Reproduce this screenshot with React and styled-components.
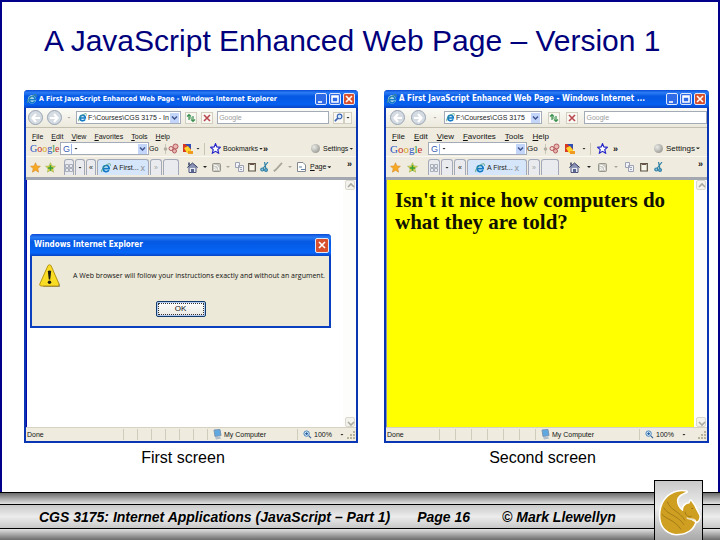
import React from 'react';
import styled, { createGlobalStyle } from 'styled-components';

const App = () => {
    return (
        <>
            <GlobalStyle />
            <Slide>
                <Board>
                    <Title>A JavaScript Enhanced Web Page – Version 1</Title>
                    <Screens>
                        <Screen>
                            <BrowserWindow
                                id="first"
                                title="A First JavaScript Enhanced Web Page - Windows Internet Explorer"
                                address="F:\Courses\CGS 3175 - Inter"
                            >
                                <Page $edge>
                                    <AlertBox />
                                </Page>
                            </BrowserWindow>
                            <Caption>First screen</Caption>
                        </Screen>
                        <Screen>
                            <BrowserWindow
                                id="second"
                                wide
                                title="A First JavaScript Enhanced Web Page - Windows Internet ..."
                                address="F:\Courses\CGS 3175"
                            >
                                <Page $color="#ffff00">
                                    <Message>Isn't it nice how computers do what they are told?</Message>
                                </Page>
                            </BrowserWindow>
                            <Caption>Second screen</Caption>
                        </Screen>
                    </Screens>
                </Board>
                <Footer>
                    <Band />
                    <FooterText>
                        <span>CGS 3175: Internet Applications (JavaScript – Part 1)</span>
                        <span>Page 16</span>
                        <span>© Mark Llewellyn</span>
                    </FooterText>
                    <Band $flip />
                    <Badge><Pegasus /></Badge>
                </Footer>
            </Slide>
        </>
    );
};
export default App;

const menus = ['File', 'Edit', 'View', 'Favorites', 'Tools', 'Help'];

const BrowserWindow = ({ id, title, address, wide, children }) => {
    return (
        <Frame>
            <TitleBar $wide={wide}>
                <IeIcon size={10} />
                <TitleText>{title}</TitleText>
                <CaptionButton aria-label="Minimize"><Glyph d="M2 8h4" /></CaptionButton>
                <CaptionButton aria-label="Maximize"><Glyph d="M2 2h6v6h-6zM2 3h6" /></CaptionButton>
                <CaptionButton aria-label="Close" $close><Glyph d="M2 2l6 6M8 2l-6 6" /></CaptionButton>
            </TitleBar>
            <NavRow $wide={wide}>
                <RoundButton aria-label="Back"><ArrowIcon /></RoundButton>
                <RoundButton aria-label="Forward" $flip><ArrowIcon /></RoundButton>
                <Caret $pale />
                <Field $grow={wide ? 98 : 105}>
                    <IeIcon size={9} />
                    <FieldInput id={id + '-address'} aria-label="Address" defaultValue={address} />
                    <DropButton aria-label="Address list"><Chevron /></DropButton>
                </Field>
                <ToolButton aria-label="Refresh"><RefreshIcon /></ToolButton>
                <ToolButton aria-label="Stop"><StopIcon /></ToolButton>
                <Field $grow={wide ? 123 : 112}>
                    <FieldInput $pale id={id + '-search'} aria-label="Search" defaultValue="Google" />
                </Field>
                {!wide && (
                    <ButtonPair>
                        <ToolButton aria-label="Search"><LensIcon /></ToolButton>
                        <ToolButton aria-label="Search options"><Caret /></ToolButton>
                    </ButtonPair>
                )}
            </NavRow>
            <MenuRow $wide={wide}>
                {menus.map((name) => (
                    <MenuItem key={name}><u>{name[0]}</u>{name.slice(1)}</MenuItem>
                ))}
            </MenuRow>
            <GoogleRow $wide={wide}>
                <GoogleLogo $wide={wide}>
                    <b>G</b><b>o</b><b>o</b><b>g</b><b>l</b><b>e</b>
                </GoogleLogo>
                <Field>
                    <Initial>G</Initial>
                    <Caret />
                    <FieldInput id={id + '-google'} aria-label="Google search" />
                    <DropButton aria-label="Search history"><Chevron /></DropButton>
                </Field>
                <FlatButton>Go</FlatButton>
                <KnobIcon />
                <GearsIcon />
                <PaintIcon />
                <Caret />
                <Divider />
                <StarIcon hollow />
                {wide ? <span /> : <FlatButton>Bookmarks<Caret /></FlatButton>}
                <More>»</More>
                <Stretch />
                <Ball />
                <FlatButton>Settings<Caret /></FlatButton>
            </GoogleRow>
            <TabRow $wide={wide}>
                <StarIcon />
                <StarIcon plus />
                <Tabs $wide={wide}>
                    <Tab aria-label="Quick tabs"><GridIcon /></Tab>
                    <Tab aria-label="Tab list"><Caret /></Tab>
                    <Tab>«</Tab>
                    <Tab $active><IeIcon size={10} /><span>A First...</span><small>x</small></Tab>
                    <Tab $pale>»</Tab>
                    <Tab aria-label="New tab" />
                </Tabs>
                <HomeIcon />
                <Caret />
                <FeedIcon />
                <Caret $pale />
                <CopyIcon />
                <PasteIcon />
                <CutIcon />
                {!wide && <PenIcon />}
                {!wide && <Caret $pale />}
                {!wide && <PageIcon />}
                {!wide && <FlatButton><u>P</u>age<Caret /></FlatButton>}
                <Stretch />
                <More $high>»</More>
            </TabRow>
            <View>
                {children}
                <ScrollBar>
                    <ScrollButton aria-label="Scroll up"><Glyph d="M2 6l3-3l3 3" color="#a9a9a0" /></ScrollButton>
                    <ScrollButton aria-label="Scroll down"><Glyph d="M2 4l3 3l3-3" color="#a9a9a0" /></ScrollButton>
                </ScrollBar>
            </View>
            <StatusRow $wide={wide}>
                <Status>Done</Status>
                <Cell /><Cell /><Cell /><Cell /><Cell /><Cell />
                <Cell $wide><MonitorIcon />My Computer</Cell>
                <Cell $wide><LensIcon plus />100%<Caret /></Cell>
                <GripIcon />
            </StatusRow>
        </Frame>
    );
};

const AlertBox = () => {
    return (
        <Alert role="alertdialog" aria-label="Windows Internet Explorer">
            <AlertTitle>
                <span>Windows Internet Explorer</span>
                <CaptionButton aria-label="Close" $close $big><Glyph d="M2 2l6 6M8 2l-6 6" /></CaptionButton>
            </AlertTitle>
            <AlertBody>
                <WarningIcon />
                <p>A Web browser will follow your instructions exactly and without an argument.</p>
            </AlertBody>
            <AlertFoot>
                <OkButton>OK</OkButton>
            </AlertFoot>
        </Alert>
    );
};

const Glyph = ({ d, color = '#fff' }) => (
    <svg width="10" height="10" viewBox="0 0 10 10" fill="none" stroke={color} strokeWidth="1.6">
        <path d={d} />
    </svg>
);

const Chevron = () => (
    <svg width="7" height="7" viewBox="0 0 7 7" fill="none" stroke="#3f568f" strokeWidth="1.5">
        <path d="M1 2.500l2.500 2.500l2.500-2.500" />
    </svg>
);

const IeIcon = ({ size }) => (
    <svg width={size} height={size} viewBox="0 0 12 12" fill="none">
        <circle cx="6" cy="6.500" r="5" fill="#d9f1ff" />
        <path d="M2.500 6.700h7.300c0-5-7.300-5-7.300 0c0 4.500 5.500 4.500 7 1.800" stroke="#1379c4" strokeWidth="2" />
        <path d="M1 11c-2-3 6-11 10-10c1 .5.500 2 0 2.500" stroke="#4c9d73" strokeWidth="1" />
    </svg>
);

const ArrowIcon = () => (
    <svg width="10" height="10" viewBox="0 0 10 10" fill="none" stroke="#fff" strokeWidth="2.200">
        <path d="M5 1L1.500 5L5 9M2 5h7" />
    </svg>
);

const RefreshIcon = () => (
    <svg width="10" height="10" viewBox="0 0 10 10" fill="none" stroke="#3c9150" strokeWidth="1.200">
        <path d="M3 7V1.500M1 3.500l2-2l2 2M3 5h3M7 3v5.500M5 6.500l2 2l2-2" />
    </svg>
);

const StopIcon = () => (
    <svg width="10" height="10" viewBox="0 0 10 10" stroke="#b9474f" strokeWidth="1.600">
        <path d="M2 2l6 6M8 2l-6 6" />
    </svg>
);

const LensIcon = ({ plus }) => (
    <svg width="9" height="9" viewBox="0 0 10 10" fill="none">
        {plus ? (
            <>
                <circle cx="4" cy="4" r="3" fill="#d5ecfb" stroke="#3c78b4" />
                <path d="M2.500 4h3M4 2.500v3M6.500 6.500L9 9" stroke="#2e5f9d" strokeWidth="1.200" />
            </>
        ) : (
            <>
                <circle cx="6.200" cy="3.800" r="2.600" fill="#dcecff" stroke="#3c66b5" strokeWidth="1.300" />
                <path d="M4.300 5.700L1 9" stroke="#3c66b5" strokeWidth="1.800" />
            </>
        )}
    </svg>
);

const StarIcon = ({ hollow, plus }) => (
    <svg width="11" height="11" viewBox="0 0 12 12">
        <path
            d="M6 .8l1.500 3.500l3.900.4l-2.900 2.500l.9 3.900L6 9.100l-3.400 2l.9-3.900L.6 4.700l3.900-.4z"
            fill={hollow ? '#fff' : plus ? '#f5d34a' : '#f7a922'}
            stroke={hollow ? '#2424c8' : plus ? '#8ab04a' : '#d98420'}
            strokeWidth={hollow ? 1.3 : 0.6}
        />
        {plus && <path d="M6 3.500v6M3 6.500h6" stroke="#35a033" strokeWidth="1.800" />}
    </svg>
);

const KnobIcon = () => (
    <svg width="5" height="12" viewBox="0 0 5 12">
        <path d="M2.500 1v10" stroke="#c9c6b8" />
        <circle cx="2.500" cy="6" r="1.800" fill="#b2afa2" />
    </svg>
);

const GearsIcon = () => (
    <svg width="11" height="11" viewBox="0 0 11 11" fill="none" stroke="#b4595b">
        <circle cx="7.500" cy="3.500" r="2.500" fill="#e9b6b2" />
        <circle cx="3" cy="5.500" r="2" fill="#f5dcd8" />
        <circle cx="6.500" cy="8" r="2" fill="#e9b6b2" />
    </svg>
);

const PaintIcon = () => (
    <svg width="10" height="11" viewBox="0 0 10 11">
        <path d="M0 1h8v8h-8z" fill="#d9391f" />
        <path d="M2 1l6 0v5z" fill="#2f4fb5" />
        <path d="M1 5l4-2l3 4v3h-4z" fill="#ffd52c" />
        <path d="M5 8h5v3h-5z" fill="#ef9b22" />
    </svg>
);

const GridIcon = () => (
    <svg width="8" height="8" viewBox="0 0 8 8" fill="#e8edf5" stroke="#a9aeb9">
        <path d="M.5 .5h3v3h-3zM4.500 .5h3v3h-3zM.5 4.500h3v3h-3zM4.500 4.500h3v3h-3z" />
    </svg>
);

const HomeIcon = () => (
    <svg width="11" height="11" viewBox="0 0 11 11">
        <path d="M2 5h7v5.500h-7z" fill="#e6e9f4" stroke="#4c5578" />
        <path d="M.3 5.500L5.500 1l5.200 4.500" fill="#8a93b6" stroke="#343d64" />
        <path d="M4 7h3v3.500h-3z" fill="#59658f" />
        <path d="M2 .5v3" stroke="#343d64" strokeWidth="1.500" />
    </svg>
);

const FeedIcon = () => (
    <svg width="9" height="9" viewBox="0 0 9 9" fill="none">
        <rect x=".5" y=".5" width="8" height="8" rx="1" fill="#c9c8c0" stroke="#98978f" />
        <path d="M2 4.500q2.500 0 2.500 2.500M2 2.200q4.800 0 4.800 4.800" stroke="#fff" />
        <circle cx="2.600" cy="6.500" r=".8" fill="#fff" />
    </svg>
);

const CopyIcon = () => (
    <svg width="9" height="10" viewBox="0 0 9 10" fill="#f1f3f8" stroke="#9da3b4">
        <path d="M.5 .5h4v5h-4zM3.500 3.500h5v6h-5z" />
        <path d="M5 5.500h2M5 7.500h2" />
    </svg>
);

const PasteIcon = () => (
    <svg width="8" height="10" viewBox="0 0 8 10">
        <path d="M.7 1.700h6.600v7.300h-6.600z" fill="#f8f6e9" stroke="#5b5142" strokeWidth="1.200" />
        <path d="M2 1h4v2h-4z" fill="#66564a" />
    </svg>
);

const CutIcon = () => (
    <svg width="9" height="10" viewBox="0 0 9 10" fill="none" stroke="#2f7fa6" strokeWidth="1.200">
        <path d="M8 0L3 6.500M4.500 0L6 7" />
        <circle cx="2.300" cy="7.500" r="1.500" fill="#8bc4df" />
        <circle cx="6" cy="8" r="1.400" fill="#8bc4df" />
    </svg>
);

const PenIcon = () => (
    <svg width="10" height="10" viewBox="0 0 10 10">
        <path d="M9 .8L3 7.500L.8 9.300" fill="none" stroke="#a9a79c" strokeWidth="1.800" />
    </svg>
);

const PageIcon = () => (
    <svg width="9" height="10" viewBox="0 0 9 10">
        <path d="M.5 .5h5.500l2.500 2.500v6.500h-8z" fill="#fff" stroke="#85888f" />
        <path d="M2 5h3M4 7.500h4" stroke="#5d81a8" />
    </svg>
);

const MonitorIcon = () => (
    <svg width="9" height="11" viewBox="0 0 9 11">
        <path d="M1 1l6-.5l1 6l-6 1z" fill="#5fa9e2" stroke="#7b96b5" />
        <path d="M2 8.500l5-1l1 2l-5 1z" fill="#aebccb" />
    </svg>
);

const GripIcon = () => (
    <svg width="9" height="9" viewBox="0 0 9 9" fill="#b9b39b">
        <path d="M7 1h2v2h-2zM4 4h2v2h-2zM7 4h2v2h-2zM1 7h2v2h-2zM4 7h2v2h-2zM7 7h2v2h-2z" />
    </svg>
);

const WarningIcon = () => (
    <svg width="22" height="24" viewBox="0 0 22 24">
        <path d="M12 3L21 21q.5 2-1 2H4z" fill="#8f8a78" />
        <path d="M9 1.500q1.500-1.500 3 0L20 20q.3 2-1.300 2H2q-1.800-.3-1.200-2z" fill="#f9dc24" stroke="#b89514" />
        <path d="M8.800 7q1.700-1 3.400 0L11.200 15.500h-1.400z" fill="#1c1a10" />
        <circle cx="10.500" cy="18.200" r="1.700" fill="#1c1a10" />
    </svg>
);

const pegasusShape =
    'M95 32C70 26 42 38 28 60C17 78 13 102 19 124C25 146 48 162 72 159C98 157 116 143 121 124L110 117C115 112 121 114 126 122C132 119 134 113 134 106C130 94 122 84 119 75L108 59L104 67C92 68 84 76 85 91C76 86 66 74 66 58C67 46 78 38 95 32z';

const Pegasus = () => (
    <svg width="48" height="60" viewBox="0 0 145 180" fill="none">
        <path d={pegasusShape} stroke="#fff" strokeWidth="9" strokeLinejoin="round" />
        <path d={pegasusShape} fill="#cf9f22" />
        <path
            d="M37 61C45 88 73 89 91 119M26 80C40 103 67 101 88 132M20 99C36 117 57 115 79 146M91 92C92 104 101 108 111 106"
            stroke="#8e6a12"
            strokeWidth="2"
        />
        <path d="M96 110C102 119 115 110 121 118" stroke="#eee6ca" strokeWidth="5" />
        <circle cx="112" cy="82" r="2" fill="#7d5d10" />
    </svg>
);

const GlobalStyle = createGlobalStyle`
  * {
    box-sizing: border-box;
  }
  body {
    margin: 0;
    background: #fff;
    font-family: "Liberation Sans", Arial, sans-serif;
  }
  button, input {
    font: inherit;
    color: inherit;
    padding: 0;
    border: 0;
    background: none;
  }
  svg {
    display: block;
    flex: none;
  }
`
const Slide = styled.main`
  min-height: 100vh;
  display: flex;
  flex-direction: column;
`
const Board = styled.section`
  flex: 1;
  display: flex;
  flex-direction: column;
  border: 2px solid #00008b;
  border-bottom: 0;
`
const Title = styled.h1`
  margin: 0;
  padding: 21px 0 0 42px;
  height: 88px;
  font-size: 30px;
  line-height: 36px;
  font-weight: 400;
  color: #00007c;
`
const Screens = styled.div`
  flex: 1;
  display: grid;
  grid-template-columns: 334fr 325fr;
  column-gap: 26px;
  padding: 0 9px 0 22px;
`
const Screen = styled.figure`
  margin: 0;
  min-width: 0;
  display: flex;
  flex-direction: column;
`
const Caption = styled.figcaption`
  height: 49px;
  padding-top: 5px;
  padding-right: 16px;
  text-align: center;
  font-size: 16px;
  line-height: 20px;
  color: #000;
  ${Screen}:nth-child(2) & {
    padding-right: 8px;
  }
`
const Frame = styled.div`
  flex: 1;
  display: flex;
  flex-direction: column;
  background: #efecdf;
  border: 2px solid #0a36b4;
  border-top: 0;
  border-radius: 4px 4px 0 0;
  font-size: 8px;
  line-height: 10px;
  color: #111;
`
const TitleBar = styled.header`
  display: flex;
  align-items: center;
  gap: 2px;
  height: 18px;
  margin: 0 -2px;
  padding: 0 3px;
  border-radius: 4px 4px 0 0;
  background: linear-gradient(#0a4bd8, #2a7cf4 15%, #0558e2 35%, #0560f0 80%, #0a44c4);
  color: #fff;
  font-family: "DejaVu Sans Condensed", "DejaVu Sans", sans-serif;
  font-weight: 700;
  font-size: ${(props) => (props.$wide ? '8px' : '7px')};
`
const TitleText = styled.span`
  flex: 1;
  min-width: 0;
  overflow: hidden;
  white-space: nowrap;
`
const CaptionButton = styled.button`
  display: grid;
  place-items: center;
  flex: none;
  width: ${(props) => (props.$big ? '14px' : '12px')};
  height: ${(props) => (props.$big ? '15px' : '12px')};
  border: 1px solid #dfe8ff;
  border-radius: 2px;
  background: ${(props) => (props.$close ? '#d8502c' : '#2f6be6')};
`
const NavRow = styled.div`
  display: flex;
  align-items: center;
  gap: ${(props) => (props.$wide ? '6px' : '4px')};
  height: 20px;
  padding: 0 ${(props) => (props.$wide ? '0' : '4px')} 0 ${(props) => (props.$wide ? '4px' : '2px')};
  background: linear-gradient(#fbfbf7, #ece9dc);
  border-bottom: 1px solid #c2bfae;
`
const RoundButton = styled.button`
  display: grid;
  place-items: center;
  width: 15px;
  height: 15px;
  flex: none;
  border: 1px solid #98a4b4;
  border-radius: 50%;
  background: #d5dbe2;
  transform: ${(props) => (props.$flip ? 'scaleX(-1)' : 'none')};
`
const Caret = styled.i`
  flex: none;
  display: inline-block;
  width: 4px;
  height: 2px;
  margin: 0 1px;
  vertical-align: middle;
  background: ${(props) => (props.$pale ? '#a9a79c' : '#222')};
  clip-path: polygon(0 0, 100% 0, 50% 100%);
`
const Field = styled.div`
  flex: ${(props) => props.$grow || 1} 1 0;
  min-width: 0;
  display: flex;
  align-items: center;
  gap: 1px;
  height: 13px;
  padding: 1px;
  background: #fff;
  border: 1px solid #a4abb8;
  color: #222;
`
const FieldInput = styled.input`
  flex: 1;
  min-width: 0;
  height: 10px;
  outline: 0;
  font-size: 7px;
  color: ${(props) => (props.$pale ? '#9c9c9c' : '#222')};
`
const DropButton = styled.button`
  display: grid;
  place-items: center;
  width: 9px;
  height: 10px;
  background: #c3d5f8;
`
const ToolButton = styled.button`
  display: grid;
  place-items: center;
  flex: none;
  min-width: 8px;
  height: 12px;
  border: 1px solid #d2cfc1;
  background: #f8f7f1;
`
const ButtonPair = styled.div`
  display: flex;
`
const MenuRow = styled.nav`
  display: flex;
  gap: ${(props) => (props.$wide ? '9px' : '8px')};
  padding: 3px 6px 0;
  height: 13px;
  font-size: ${(props) => (props.$wide ? '8px' : '7px')};
`
const MenuItem = styled.button`
  line-height: 9px;
`
const GoogleRow = styled.div`
  display: grid;
  align-items: center;
  height: 16px;
  padding-left: 4px;
  border-bottom: 1px solid #f9f8f2;
  white-space: nowrap;
  grid-template-columns: ${(props) =>
        props.$wide
            ? '38px 99px 16px 6px 16px 16px 9px 7px 16px 0 12px 1fr 12px 41px'
            : '30px 89px 14px 5px 15px 12px 9px 6px 13px 40px 12px 1fr 12px 33px'};
  font-size: ${(props) => (props.$wide ? '8px' : '7px')};
`
const GoogleLogo = styled.span`
  font-family: "Liberation Serif", serif;
  font-size: ${(props) => (props.$wide ? '11px' : '10px')};
  b {
    font-weight: 400;
    color: #2a53c4;
  }
  b:nth-child(2), b:nth-child(6) {
    color: #c9302a;
  }
  b:nth-child(3) {
    color: #d9a31c;
  }
  b:nth-child(5) {
    color: #2c9440;
  }
`
const Initial = styled.span`
  padding: 0 1px;
  border-right: 1px solid #9db4e6;
  color: #3c60b5;
  font-size: 9px;
`
const FlatButton = styled.button`
  text-align: left;
  white-space: nowrap;
`
const Divider = styled.span`
  width: 1px;
  height: 12px;
  background: #c9c5b2;
`
const More = styled.span`
  font-size: 9px;
  font-weight: 700;
  align-self: ${(props) => (props.$high ? 'flex-start' : 'center')};
`
const Stretch = styled.span`
  flex: 1;
`
const Ball = styled.span`
  width: 9px;
  height: 9px;
  border-radius: 50%;
  background: radial-gradient(circle at 35% 35%, #e9e9e6, #85857f);
`
const TabRow = styled.div`
  display: flex;
  align-items: center;
  gap: ${(props) => (props.$wide ? '6px' : '4px')};
  height: 23px;
  padding: 2px 4px;
  border-bottom: 3px solid #a3a7b0;
  white-space: nowrap;
  font-size: 7px;
`
const Tab = styled.button`
  display: flex;
  align-items: center;
  justify-content: center;
  gap: 2px;
  min-width: 0;
  overflow: hidden;
  height: 16px;
  border: 1px solid #a3a9b8;
  border-bottom: 0;
  border-radius: 3px 3px 0 0;
  background: ${(props) => (props.$active ? '#d6e6fa' : '#e9ebee')};
  color: ${(props) => (props.$pale ? '#a5a5a5' : '#222')};
  small {
    font-size: 9px;
    color: #8a8f99;
  }
`
const Tabs = styled.div`
  display: grid;
  column-gap: 1px;
  margin: 0 4px;
  grid-template-columns: ${(props) =>
        props.$wide
            ? '12px 12px 12px 60px 12px 18px'
            : '10px 10px 10px 52px 12px 16px'};
`
const View = styled.div`
  flex: 1;
  display: flex;
  min-height: 240px;
  background: #fff;
`
const Page = styled.div`
  flex: 1;
  min-width: 0;
  background: ${(props) => props.$color || '#fff'};
  border-left: ${(props) => (props.$edge ? '1px solid #0a0aa8' : '1px solid #8d93a0')};
`
const ScrollBar = styled.div`
  width: 13px;
  display: flex;
  flex-direction: column;
  justify-content: space-between;
  align-items: center;
  background: #fdfdfb;
`
const ScrollButton = styled.button`
  display: grid;
  place-items: center;
  width: 10px;
  height: 10px;
  border: 1px solid #dad8cc;
  border-radius: 2px;
  background: #f3f2ec;
`
const StatusRow = styled.footer`
  display: grid;
  grid-template-columns: ${(props) =>
        props.$wide
            ? '1fr repeat(6, 16px) 104px 58px 10px'
            : '1fr repeat(6, 14px) 90px 49px 10px'};
  height: 14px;
  align-items: center;
  border-top: 1px solid #d5d2c3;
  font-size: 7px;
`
const Status = styled.span`
  padding-left: 1px;
`
const Cell = styled.span`
  display: flex;
  align-items: center;
  gap: 2px;
  height: 11px;
  padding-left: ${(props) => (props.$wide ? '5px' : '0')};
  border-left: 1px solid #cfccbb;
  ${Caret} {
    margin-left: 6px;
  }
`
const Message = styled.p`
  margin: 0;
  padding: 9px 8px;
  font-family: "Liberation Serif", serif;
  font-weight: 700;
  font-size: 21px;
  line-height: 22px;
  color: #111100;
`
const Alert = styled.div`
  margin: 54px 12px 0 3px;
  border: 2px solid #0a3fc0;
  border-top: 0;
  border-radius: 4px 4px 0 0;
  background: #ece9d8;
`
const AlertTitle = styled.div`
  display: flex;
  align-items: center;
  justify-content: space-between;
  height: 22px;
  margin: 0 -2px;
  padding: 0 2px 0 4px;
  border-radius: 4px 4px 0 0;
  background: linear-gradient(#0a4bd8, #2a7cf4 15%, #0558e2 35%, #0566f8 85%, #0a44c4);
  color: #fff;
  font-family: "DejaVu Sans Condensed", "DejaVu Sans", sans-serif;
  font-weight: 700;
  font-size: 8px;
`
const AlertBody = styled.div`
  display: flex;
  align-items: center;
  gap: 12px;
  padding: 8px 6px 0 7px;
  p {
    margin: 0;
    white-space: nowrap;
    font-family: "Open Sans", sans-serif;
    font-size: 7px;
  }
`
const AlertFoot = styled.div`
  display: flex;
  justify-content: center;
  padding: 13px 0 9px;
`
const OkButton = styled.button`
  width: 50px;
  height: 16px;
  border: 1px solid #123c6e;
  border-radius: 2px;
  outline: 1px dotted #333;
  outline-offset: -3px;
  background: linear-gradient(#fff, #e9e8e0);
  box-shadow: inset 0 0 0 1px #b4cbf2;
`
const Footer = styled.footer`
  position: relative;
  background: #e4e4e4;
`
const Band = styled.div`
  height: 12px;
  border-top: 1px solid #000;
  background: linear-gradient(${(props) => (props.$flip ? '#e2e2e2, #6c6c6c' : '#6c6c6c, #e2e2e2')});
`
const FooterText = styled.div`
  display: flex;
  height: 24px;
  padding-left: 39px;
  border-top: 1px solid #000;
  background: linear-gradient(#c8c8c8, #ececec 50%, #c8c8c8);
  font-size: 14px;
  line-height: 24px;
  font-weight: 700;
  font-style: italic;
  white-space: nowrap;
  span:nth-child(2) {
    margin: 0 32px 0 27px;
  }
`
const Badge = styled.div`
  position: absolute;
  right: 17px;
  bottom: 0;
  width: 49px;
  height: 60px;
  overflow: hidden;
  border: 1px solid #000;
  border-bottom: 0;
  background: linear-gradient(#c9c9c9, #ededed 45%, #a9a9a9);
`
